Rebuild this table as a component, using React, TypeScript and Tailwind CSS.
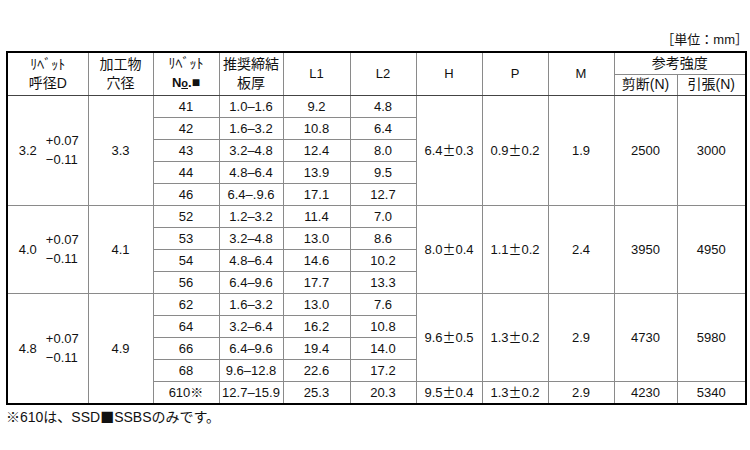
const font = { fontFamily: '"Liberation Sans", "Noto Sans CJK JP", sans-serif' };
const cjk = { fontFamily: '"Noto Sans CJK JP", sans-serif' };

type Group = {
  d: string;
  hole: string;
  rows: { no: string; t: string; l1: string; l2: string }[];
  h: string;
  p: string;
  m: string;
  shear: string;
  tensile: string;
};

const groups: Group[] = [
  {
    d: "3.2",
    hole: "3.3",
    rows: [
      { no: "41", t: "1.0–1.6", l1: "9.2", l2: "4.8" },
      { no: "42", t: "1.6–3.2", l1: "10.8", l2: "6.4" },
      { no: "43", t: "3.2–4.8", l1: "12.4", l2: "8.0" },
      { no: "44", t: "4.8–6.4", l1: "13.9", l2: "9.5" },
      { no: "46", t: "6.4–.9.6", l1: "17.1", l2: "12.7" },
    ],
    h: "6.4±0.3",
    p: "0.9±0.2",
    m: "1.9",
    shear: "2500",
    tensile: "3000",
  },
  {
    d: "4.0",
    hole: "4.1",
    rows: [
      { no: "52", t: "1.2–3.2", l1: "11.4", l2: "7.0" },
      { no: "53", t: "3.2–4.8", l1: "13.0", l2: "8.6" },
      { no: "54", t: "4.8–6.4", l1: "14.6", l2: "10.2" },
      { no: "56", t: "6.4–9.6", l1: "17.7", l2: "13.3" },
    ],
    h: "8.0±0.4",
    p: "1.1±0.2",
    m: "2.4",
    shear: "3950",
    tensile: "4950",
  },
];

const cell = "border border-[#8a8a8a] text-center align-middle p-0";

// ± in the reference is the full-width glyph
function PM({ v }: { v: string }) {
  const [a, b] = v.split("±");
  return (
    <>
      {a}
      <span style={cjk} className="text-[13px]">±</span>
      {b}
    </>
  );
}

export default function App() {
  return (
    <div className="w-[750px] h-[450px] bg-white text-[#111] text-[13px] overflow-hidden" style={font}>
      <div className="flex justify-end pr-[2px] pt-[32px] h-[51px] text-[13px] leading-[15px]">
        ［単位：mm］
      </div>
      <div className="ml-[6px] w-[741px] border-2 border-black">
        <table className="w-full table-fixed border-collapse border-hidden">
          <colgroup>
            <col className="w-[80px]" />
            <col className="w-[65px]" />
            <col className="w-[66px]" />
            <col className="w-[64px]" />
            <col className="w-[67px]" />
            <col className="w-[66px]" />
            <col className="w-[66px]" />
            <col className="w-[66px]" />
            <col className="w-[66px]" />
            <col className="w-[63px]" />
            <col className="w-[68px]" />
          </colgroup>
          <thead className="text-[14px] leading-[19px]">
            <tr className="h-[21px]">
              <th rowSpan={2} className={`${cell} font-normal border-b-[#444]`}>
                <div className="text-[14px] leading-[19px]">ﾘﾍﾞｯﾄ</div>
                <div>呼径D</div>
              </th>
              <th rowSpan={2} className={`${cell} font-normal border-b-[#444]`}>
                <div>加工物</div>
                <div>穴径</div>
              </th>
              <th rowSpan={2} className={`${cell} font-normal border-b-[#444]`}>
                <div className="text-[14px] leading-[19px]">ﾘﾍﾞｯﾄ</div>
                <div className="text-[13px] font-bold">
                  N<span className="underline text-[11px]">o</span>.<span className="text-[14px]">■</span>
                </div>
              </th>
              <th rowSpan={2} className={`${cell} font-normal border-b-[#444]`}>
                <div>推奨締結</div>
                <div>板厚</div>
              </th>
              {["L1", "L2", "H", "P", "M"].map((h) => (
                <th key={h} rowSpan={2} className={`${cell} font-normal text-[13px] border-b-[#444]`}>
                  {h}
                </th>
              ))}
              <th colSpan={2} className={`${cell} font-normal`}>
                参考強度
              </th>
            </tr>
            <tr className="h-[21px]">
              <th className={`${cell} font-normal border-b-[#444]`}>剪断(N)</th>
              <th className={`${cell} font-normal border-b-[#444]`}>引張(N)</th>
            </tr>
          </thead>
          <tbody className="leading-[15px]">
            {groups.map((g) =>
              g.rows.map((r, i) => (
                <tr key={r.no} className={`h-[22px] ${i === 0 ? "[&>td]:border-t-black" : ""}`}>
                  {i === 0 && (
                    <>
                      <td rowSpan={g.rows.length} className={cell}>
                        <Tolerance d={g.d} />
                      </td>
                      <td rowSpan={g.rows.length} className={cell}>
                        {g.hole}
                      </td>
                    </>
                  )}
                  <td className={cell}>{r.no}</td>
                  <td className={cell}>{r.t}</td>
                  <td className={cell}>{r.l1}</td>
                  <td className={cell}>{r.l2}</td>
                  {i === 0 && (
                    <>
                      <td rowSpan={g.rows.length} className={cell}><PM v={g.h} /></td>
                      <td rowSpan={g.rows.length} className={cell}><PM v={g.p} /></td>
                      <td rowSpan={g.rows.length} className={cell}>{g.m}</td>
                      <td rowSpan={g.rows.length} className={cell}>{g.shear}</td>
                      <td rowSpan={g.rows.length} className={cell}>{g.tensile}</td>
                    </>
                  )}
                </tr>
              ))
            )}
            {[
              { no: "62", t: "1.6–3.2", l1: "13.0", l2: "7.6" },
              { no: "64", t: "3.2–6.4", l1: "16.2", l2: "10.8" },
              { no: "66", t: "6.4–9.6", l1: "19.4", l2: "14.0" },
              { no: "68", t: "9.6–12.8", l1: "22.6", l2: "17.2" },
            ].map((r, i) => (
              <tr key={r.no} className={`h-[22px] ${i === 0 ? "[&>td]:border-t-black" : ""}`}>
                {i === 0 && (
                  <>
                    <td rowSpan={5} className={cell}>
                      <Tolerance d="4.8" />
                    </td>
                    <td rowSpan={5} className={cell}>4.9</td>
                  </>
                )}
                <td className={cell}>{r.no}</td>
                <td className={cell}>{r.t}</td>
                <td className={cell}>{r.l1}</td>
                <td className={cell}>{r.l2}</td>
                {i === 0 && (
                  <>
                    <td rowSpan={4} className={cell}><PM v="9.6±0.5" /></td>
                    <td rowSpan={4} className={cell}><PM v="1.3±0.2" /></td>
                    <td rowSpan={4} className={cell}>2.9</td>
                    <td rowSpan={4} className={cell}>4730</td>
                    <td rowSpan={4} className={cell}>5980</td>
                  </>
                )}
              </tr>
            ))}
            <tr className="h-[22px]">
              <td className={cell}>610<span style={cjk} className="text-[13px]">※</span></td>
              <td className={cell}>12.7–15.9</td>
              <td className={cell}>25.3</td>
              <td className={cell}>20.3</td>
              <td className={cell}><PM v="9.5±0.4" /></td>
              <td className={cell}><PM v="1.3±0.2" /></td>
              <td className={cell}>2.9</td>
              <td className={cell}>4230</td>
              <td className={cell}>5340</td>
            </tr>
          </tbody>
        </table>
      </div>
      <div className="ml-[6px] mt-[2px] text-[14px] leading-[18px]">
        <span style={cjk}>※</span>610は、SSD<span style={cjk}>■</span>SSBSのみです。
      </div>
    </div>
  );
}

function Tolerance({ d }: { d: string }) {
  return (
    <div className="flex items-center justify-center gap-[9px] pl-[2px]">
      <span>{d}</span>
      <div className="flex flex-col items-start leading-[19px]">
        <span>+0.07</span>
        <span>−0.11</span>
      </div>
    </div>
  );
}
